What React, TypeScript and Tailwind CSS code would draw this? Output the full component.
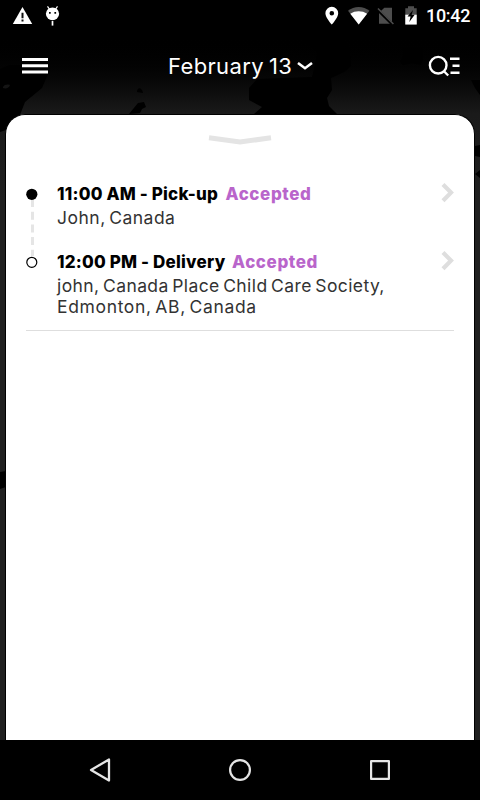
import React from "react";

const sans = "font-['Inter','Noto_Sans',sans-serif]";

function StatusBar() {
  return (
    <div className="flex h-8 items-center pl-3 pr-[10px]">
      <svg width="52" height="24" viewBox="0 0 52 24">
        <path d="M10.5 3 20.2 20H.8Z" fill="#fff" />
        <path d="M9.5 8.7h2v5.5h-2zM9.5 15.5h2v2h-2z" fill="#111" />
        <path d="M35.5 2.3 38 6M45.5 2.3 43 6" stroke="#fff" strokeWidth="1.2" />
        <ellipse cx="40.5" cy="9.8" rx="6.6" ry="6.4" fill="#fff" />
        <path d="M37 8h1.7v1.7H37zM42.4 8h1.7v1.7h-1.7z" fill="#000" />
        <path d="M40.5 17v4.6" stroke="#fff" strokeWidth="1.7" />
      </svg>
      <svg className="ml-auto" width="96" height="24" viewBox="324 4 96 24">
        <path d="M331.8 6.8a6.4 6.4 0 0 0-6.4 6.4c0 4.6 6.4 11.3 6.4 11.3s6.4-6.7 6.4-11.3a6.4 6.4 0 0 0-6.4-6.4Zm0 8.7a2.3 2.3 0 1 1 0-4.6 2.3 2.3 0 0 1 0 4.6Z" fill="#fff" />
        <path d="M358.7 24.5 348 10.8c5.8-5.2 15.6-5.2 21.4 0Z" fill="#4d4d4d" />
        <path d="M358.7 24.5 350.3 13.8c4.8-3.3 12-3.3 16.8 0Z" fill="#fff" />
        <path d="m384.3 7.7h7.7v16h-13V12.8Z" fill="#4d4d4d" />
        <path d="M377.2 9.3 392.6 24.5" stroke="#000" strokeWidth="3" />
        <path d="M378 8.5 393.4 24" stroke="#4d4d4d" strokeWidth="1.5" />
        <path d="M408 6.3h6v2h2.7v16.2h-11.4V8.3h2.7Z" fill="#4d4d4d" />
        <path d="M405.3 14.7h11.4v9.8h-11.4z" fill="#fff" />
        <path d="m413 10-5.5 6.6h3.1l-1.3 5.5 5.4-7.3h-3Z" fill="#000" />
      </svg>
      <span className="ml-[6px] w-[44px] whitespace-nowrap font-[Roboto,sans-serif] text-[18px] font-medium tracking-[-0.3px] leading-8 text-white">10:42</span>
    </div>
  );
}

function MapBackdrop() {
  return (
    <svg className="absolute inset-0" width="480" height="740" viewBox="0 0 480 740" fill="#000">
      <path d="M0 69 10 65 22 65 48 74 42 88 25 102 20 115 6 130 0 132Z" />
      <path d="M3 87c1-3 6-3 7-2-1 3-4 4-7 3Z" fill="#141414" />
      <path d="M137 92c0-5 5-5 6 1ZM129 114l9-11 6-1 2 5-4 2-2 4Z" />
      <path d="M302 36 335 36 349 47 351 66 344 72 331 78 332 90 327 98 329 106 337 114H254l8-7-13-7V88l8-9 55-2 6-25-11-10Z" />
      <path d="m403 48 20 1 0 10-2 6-9-2-9 2-3-3 4-7ZM471 80h9v15l-5-7ZM475 146l5-1v12l-5-1ZM475 174l5-4v8ZM0 472l6-1v16l-6 2Z" />
    </svg>
  );
}

function Header() {
  return (
    <header className="flex h-[68px] items-center justify-between pl-[22px] pr-5">
      <svg width="26" height="16" viewBox="0 0 26 16" fill="#fff">
        <path d="M0 0h26v3H0zM0 6.3h26v3H0zM0 12.6h26v3H0z" />
      </svg>
      <div className="ml-[5px] flex items-center">
        <span className="w-[129px] whitespace-nowrap text-[22px] leading-7 tracking-[0.35px] text-white [word-spacing:-1.5px]">February 13</span>
        <svg width="16" height="10" viewBox="0 0 16 10" fill="none" stroke="#fff" strokeWidth="2.6"><path d="m1 2 7 5.2L15 2" /></svg>
      </div>
      <svg width="32" height="22" viewBox="0 0 32 22" fill="none" stroke="#fff" strokeWidth="2.4">
        <circle cx="10.2" cy="10.2" r="8.3" />
        <path d="m15.7 16 4.5 4.5M22 3.8h9.5M24.5 10.8h7M22.5 17.8h9" />
      </svg>
    </header>
  );
}

function Arrow() {
  return (
    <svg className="ml-auto shrink-0" width="13" height="20" viewBox="0 0 13 20" fill="none" stroke="#dedede" strokeWidth="4.2"><path d="M2 1.5 10 9.6l-8 8.2" /></svg>
  );
}

export default function App() {
  return (
    <div className={`relative flex h-[800px] w-[480px] flex-col overflow-hidden bg-black ${sans}`}>
      <div className="relative flex h-[740px] flex-col bg-linear-to-b from-black from-[30px] via-[#1a1a1a] via-[114px] to-[#202020] to-[200px]">
        <MapBackdrop />
        <div className="relative flex h-full flex-col">
          <StatusBar />
          <Header />
          <main className="mx-[5px] mt-[14px] flex-1 rounded-t-[20px] border border-b-0 border-black bg-white px-5">
            <svg className="mx-auto mt-[19px]" width="64" height="12" viewBox="0 0 64 12" fill="none" stroke="#e4e4e4" strokeWidth="5"><path d="M1 3.8 32 8 63 3.8" /></svg>
            <section className="mt-[37px] flex h-[148px] border-b border-[#dedede]">
              <svg className="shrink-0" width="31" height="90" viewBox="26 183 31 90">
                <path d="M32.5 199V256" stroke="#e5e5e5" strokeWidth="3" strokeDasharray="8 4.7" />
                <circle cx="31.8" cy="194.3" r="5.6" />
                <circle cx="31.8" cy="262.3" r="5" fill="#fff" stroke="#000" strokeWidth="1.2" />
              </svg>
              <div className="flex-1 whitespace-nowrap">
                <div className="flex h-[68px]">
                  <div>
                    <div className="flex text-[17px] font-extrabold leading-[22px]">
                      <h2 className="w-[168.5px] tracking-[0.25px] text-black [word-spacing:-0.3px]">11:00 AM - Pick-up</h2>
                      <span className="tracking-[0.6px] text-[#b965cb]">Accepted</span>
                    </div>
                    <p className="mt-[2px] text-[17.5px] leading-[22px] tracking-[0.5px] text-[#333] [word-spacing:-2px]">John, Canada</p>
                  </div>
                  <Arrow />
                </div>
                <div className="flex">
                  <div>
                    <div className="flex text-[17px] font-extrabold leading-[22px]">
                      <h2 className="w-[175px] tracking-[0.25px] text-black [word-spacing:-0.3px]">12:00 PM - Delivery</h2>
                      <span className="tracking-[0.6px] text-[#b965cb]">Accepted</span>
                    </div>
                    <p className="mt-[2px] text-[17.5px] leading-[21px] text-[#333]">
                      <span className="tracking-[0.4px] [word-spacing:-1.8px]">john, Canada Place Child Care Society,</span><br />
                      <span className="tracking-[0.65px] [word-spacing:-1.9px]">Edmonton, AB, Canada</span>
                    </p>
                  </div>
                  <Arrow />
                </div>
              </div>
            </section>
          </main>
        </div>
      </div>
      <nav className="flex h-[60px] items-center justify-between pl-[89px] pr-[89px]">
        <svg width="22" height="26" viewBox="0 0 22 26" fill="none" stroke="#e5e5e5" strokeWidth="2.3" strokeLinejoin="round"><path d="M20 2.5v21L2 13Z" /></svg>
        <svg width="24" height="24" viewBox="0 0 24 24" fill="none" stroke="#e5e5e5" strokeWidth="2.2"><circle cx="12" cy="12" r="9.9" /></svg>
        <svg width="22" height="22" viewBox="0 0 22 22" fill="none" stroke="#e5e5e5" strokeWidth="2.2" strokeLinejoin="round"><path d="M2.1 2.1h17.8v17.8H2.1z" /></svg>
      </nav>
    </div>
  );
}
